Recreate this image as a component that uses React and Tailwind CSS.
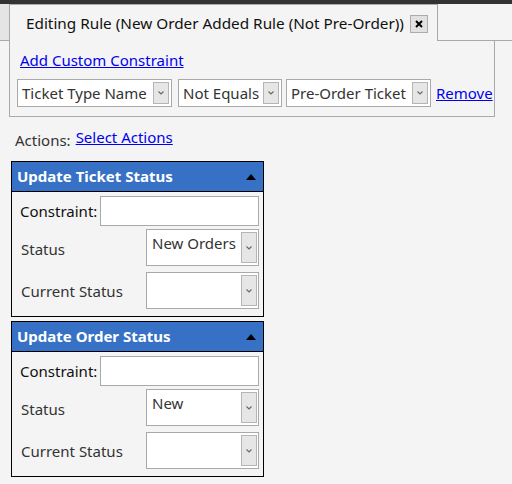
import React from "react";

const font = { fontFamily: '"Noto Sans", "Open Sans", sans-serif' };

function Arrow({ cls }) {
  return (
    <div className={`flex items-center justify-center w-[16px] border border-[#b5b5b5] bg-[#e6e6e6] ${cls || ""}`}>
      <svg width="8" height="6" viewBox="0 0 8 6">
        <path d="M1.5 1.5 L4 4 L6.5 1.5" stroke="#666" strokeWidth="1.1" fill="none" />
      </svg>
    </div>
  );
}

function InlineSelect({ w, text }) {
  return (
    <div className={`flex h-[28px] ${w} border border-[#a9a9a9] bg-white items-stretch`}>
      <div className="flex-1 flex items-center pl-[4px] text-[15px] text-[#333] whitespace-nowrap overflow-hidden">{text}</div>
      <Arrow cls="my-[2px] mr-[2px]" />
    </div>
  );
}

function TallSelect({ text }) {
  return (
    <div className="flex h-[37px] w-[113px] border border-[#a9a9a9] bg-white items-stretch">
      <div className="flex-1 pl-[5px] pt-[3px] text-[15px] leading-[20px] text-[#333] whitespace-nowrap overflow-hidden">{text}</div>
      <Arrow cls="my-[2px] mr-[1px]" />
    </div>
  );
}

function Panel({ title, status, className }) {
  return (
    <div className={`ml-[11px] w-[253px] border border-black ${className || ""}`}>
      <div className="h-[30px] bg-[#3771c5] border-b border-black flex items-center justify-between pl-[5px] pr-[7px]">
        <span className="text-white font-bold text-[15px]">{title}</span>
        <svg width="10" height="6" viewBox="0 0 10 6"><path d="M0 6 L5 0 L10 6 Z" fill="#000" /></svg>
      </div>
      <div className="pl-[8px] pr-[4px] pt-[4px] pb-[7px]">
        <div className="flex items-center justify-between">
          <span className="text-[15px] text-[#111]">Constraint:</span>
          <div className="w-[159px] h-[30px] border border-[#a9a9a9] bg-white" />
        </div>
        <div className="flex items-center justify-between mt-[3px]">
          <span className="text-[15px] text-[#333] pl-[1px] pt-[3px]">Status</span>
          <TallSelect text={status} />
        </div>
        <div className="flex items-center justify-between mt-[6px]">
          <span className="text-[15px] text-[#333] pl-[1px] pt-[2px]">Current Status</span>
          <TallSelect text="" />
        </div>
      </div>
    </div>
  );
}

export default function App() {
  return (
    <div style={font} className="w-[512px] h-[484px] bg-[#f4f4f4] overflow-hidden">
      <div className="h-[4px] bg-[#333]" />
      <div className="flex h-[37px]">
        <div className="w-[10px] bg-[#e5e5e5] border-r border-b border-[#a9a9a9]" />
        <div className="w-[428px] border-t border-r border-[#a9a9a9] flex items-center pl-[16px] pt-[1px]">
          <span className="text-[15.3px] text-[#111] whitespace-nowrap">Editing Rule (New Order Added Rule (Not Pre-Order))</span>
          <div className="ml-[6px] w-[18px] h-[18px] border border-[#acacac] bg-[#e1e1e1] flex items-center justify-center">
            <svg width="8" height="8" viewBox="0 0 8 8"><path d="M1 1 L7 7 M7 1 L1 7" stroke="#000" strokeWidth="2" /></svg>
          </div>
        </div>
        <div className="flex-1 border-b border-[#a9a9a9]" />
      </div>
      <div className="ml-[9px] w-[486px] h-[76px] border-x border-b border-[#a9a9a9] pl-[10px] pt-[9px]">
        <div className="text-[15px] leading-[20px] text-[#0000ee] underline">Add Custom Constraint</div>
        <div className="flex items-center mt-[9px] -ml-[3px]">
          <InlineSelect w="w-[155px]" text="Ticket Type Name" />
          <div className="w-[6px]" />
          <InlineSelect w="w-[104px]" text="Not Equals" />
          <div className="w-[4px]" />
          <InlineSelect w="w-[145px]" text="Pre-Order Ticket" />
          <span className="ml-[5px] text-[15px] text-[#0000ee] underline">Remove</span>
        </div>
      </div>
      <div className="flex items-start h-[44px] pl-[15px] pt-[10px]">
        <span className="text-[15px] leading-[20px] text-[#333] mt-[3px]">Actions:</span>
        <span className="ml-[5px] text-[15px] leading-[20px] text-[#0000ee] underline">Select Actions</span>
      </div>
      <Panel title="Update Ticket Status" status="New Orders" />
      <Panel title="Update Order Status" status="New" className="mt-[4px]" />
    </div>
  );
}
